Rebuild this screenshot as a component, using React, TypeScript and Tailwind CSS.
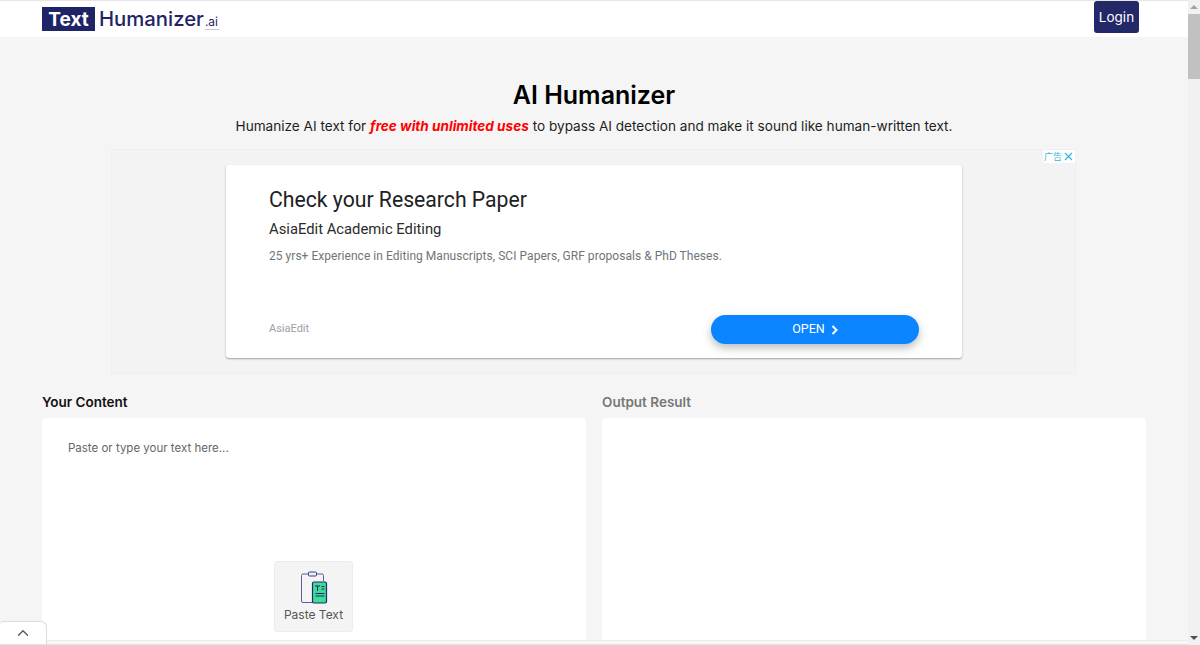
import { ChevronUp } from 'lucide-react'

const poppins = { fontFamily: 'Inter, "Noto Sans", sans-serif' }

function PasteIcon() {
  return (
    <svg width="28" height="34" viewBox="0 0 28 34" fill="none">
      <path d="M8 3H3a1.5 1.5 0 0 0-1.500 1.500V30A1.500 1.500 0 0 0 3 31.500h10" stroke="#5b5f9e" strokeWidth="1" />
      <path d="M17 3h5a1.500 1.500 0 0 1 1.500 1.500V10" stroke="#5b5f9e" strokeWidth="1" />
      <rect x="8.500" y="1" width="8" height="4" rx="1" stroke="#3b3f85" strokeWidth="1" fill="#eef0f5" />
      <rect x="12.500" y="11" width="14" height="21" rx="1.500" fill="#3ddc97" stroke="#23286b" strokeWidth="1.200" />
      <path d="M15 15h5M17.500 15v5M21.500 15.500h3M21.500 18h3M15.500 22.500h9M15.500 25h9" stroke="#23286b" strokeWidth="1" />
    </svg>
  )
}

export default function App() {
  return (
    <div className="relative flex h-[645px] w-[1200px] overflow-hidden bg-[#f5f5f5]" style={poppins}>
      <div className="flex min-w-0 flex-1 flex-col">
        {/* En-tête */}
        <header className="flex h-[37px] shrink-0 items-start justify-between border-t border-[#e6e6e6] bg-white pl-[42px] pr-[49px]">
          <div className="mt-[6px] flex items-start">
            <span className="flex h-[24px] w-[53px] items-center justify-center bg-[#1f2466] text-[19px] font-bold leading-none text-white">Text</span>
            <span className="relative ml-[4px] text-[20.300px] font-medium leading-[24px] text-[#1f2466]">
              Humanizer
              <span className="ml-[1px] text-[12px] font-normal">.ai</span>
              <span className="absolute bottom-[4px] right-[-2px] h-[1px] w-[15px] rounded-full bg-[#c5c8d8]" />
            </span>
          </div>
          <button className="h-[32px] w-[45px] rounded-[3px] bg-[#222868] text-[13.500px] text-white">Login</button>
        </header>

        <main className="flex min-h-0 flex-1 flex-col">
          <h1 className="mt-[41px] text-center text-[25px] font-semibold leading-[34px] text-black">AI Humanizer</h1>
          <p className="mt-[4px] text-center text-[13.600px] leading-[20px] text-[#1d1d1d]">
            Humanize AI text for <em className="font-bold text-[#ff0000]">free with unlimited uses</em> to bypass AI detection and make it sound like human-written text.
          </p>

          {/* Publicité */}
          <div className="relative ml-[111px] mt-[13px] flex h-[225px] w-[965px] shrink-0 justify-center border border-[#efefef] bg-[#f3f3f3] pl-[1px] pt-[15px]">
            <div className="absolute right-0 top-0 flex h-[13px] items-center gap-[2px] bg-white pl-[1px] pr-[2px] text-[9px] leading-none text-[#35b8d8]" style={{ fontFamily: '"Noto Sans CJK SC", sans-serif' }}>
              广告
              <svg width="9" height="9" viewBox="0 0 9 9" stroke="#35b8d8" strokeWidth="1.200"><path d="M1 1l7 7M8 1L1 8" /></svg>
            </div>
            <div className="flex h-[193px] w-[736px] flex-col rounded-[3px] bg-white px-[43px] shadow-[0_1px_2px_rgba(0,0,0,0.35)]" style={{ fontFamily: 'Roboto, sans-serif' }}>
              <div className="mt-[21px] text-[21.200px] leading-[28px] text-[#202124]">Check your Research Paper</div>
              <div className="mt-[5px] text-[14.800px] leading-[20px] text-[#2b2b2b]">AsiaEdit Academic Editing</div>
              <div className="mt-[8px] text-[12px] leading-[18px] tracking-[0.003em] text-[#70757a]">25 yrs+ Experience in Editing Manuscripts, SCI Papers, GRF proposals &amp; PhD Theses.</div>
              <div className="mt-[50px] flex items-center justify-between">
                <span className="text-[11px] text-[#9aa0a6]">AsiaEdit</span>
                <button className="flex h-[29px] w-[208px] items-center justify-center gap-[6px] rounded-full bg-[#0a84ff] text-[12.500px] text-white shadow-[0_4px_8px_rgba(60,64,67,0.35)]">
                  OPEN
                  <svg width="7" height="10" viewBox="0 0 7 10" fill="none" stroke="white" strokeWidth="2"><path d="M1.500 1l4 4-4 4" /></svg>
                </button>
              </div>
            </div>
          </div>

          {/* Zones de texte */}
          <div className="mt-[20px] grid min-h-0 flex-1 grid-cols-[544px_544px] gap-x-[16px] pl-[42px]">
            <div className="flex min-h-0 flex-col">
              <div className="text-[13.500px] font-semibold leading-[16px] text-[#111]">Your Content</div>
              <div className="mt-[8px] flex flex-1 flex-col items-center rounded-t-[4px] bg-white">
                <div className="mt-[22px] w-full px-[26px] text-[11.500px] leading-[16px] text-[#666]">Paste or type your text here...</div>
                <button className="mr-[1px] mt-[105px] flex h-[71px] w-[79px] flex-col items-center rounded-[3px] border border-[#ececec] bg-[#f4f4f4] pt-[9px] text-[12px] leading-[16px] text-[#555]">
                  <PasteIcon />
                  <span className="mt-[2px]">Paste Text</span>
                </button>
              </div>
            </div>
            <div className="flex min-h-0 flex-col">
              <div className="text-[13.500px] font-semibold leading-[16px] text-[#777]">Output Result</div>
              <div className="mt-[8px] flex-1 rounded-t-[4px] bg-white" />
            </div>
          </div>
        </main>
        <div className="h-[5px] shrink-0 border-t border-b border-t-[#ececec] border-b-[#dde6e6] bg-[#f7f7f7]" />
      </div>

      {/* Barre de défilement */}
      <div className="flex w-[12px] shrink-0 flex-col items-center bg-[#f1f1f1]">
        <div className="flex h-[14px] items-center justify-center"><div className="border-x-[4px] border-b-[4px] border-x-transparent border-b-[#a3a3a3]" /></div>
        <div className="h-[65px] w-full bg-[#c1c1c1]" />
        <div className="mt-auto mb-[5px] border-x-[4px] border-t-[4px] border-x-transparent border-t-[#505050]" />
      </div>

      <div className="absolute bottom-[1px] left-0 flex h-[23px] w-[47px] items-center justify-center rounded-tr-[6px] rounded-tl-[4px] border-r border-t border-[#dcdcdc] bg-white">
        <ChevronUp size={18} strokeWidth={1.700} className="text-[#555]" />
      </div>
    </div>
  )
}
